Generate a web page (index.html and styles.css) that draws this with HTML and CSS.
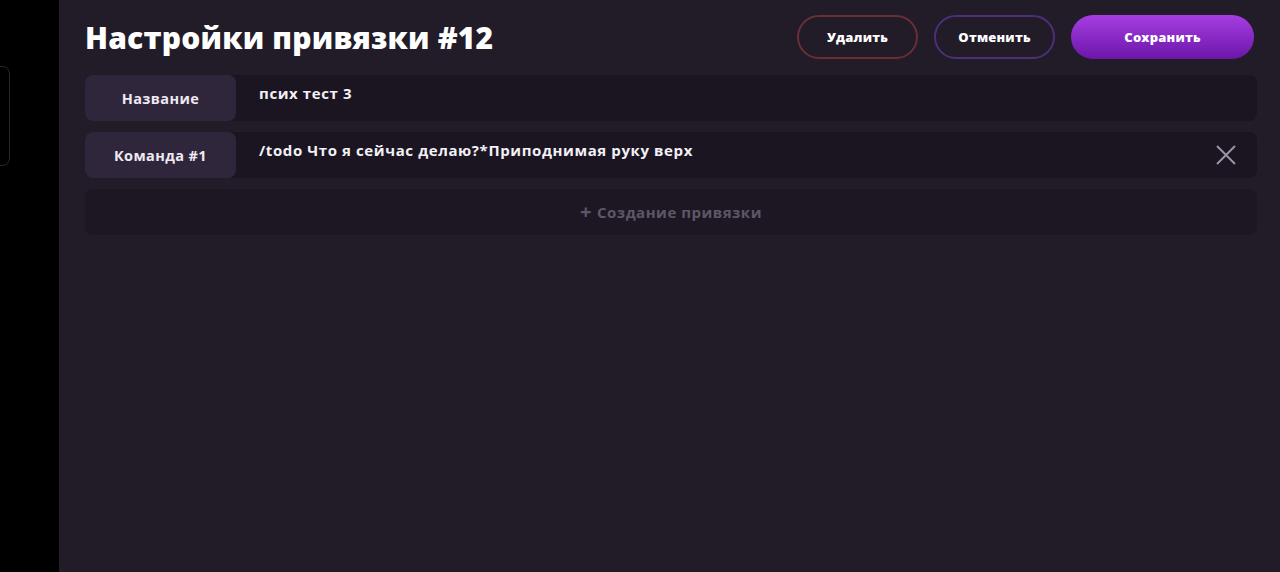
FILE: index.html
```html
<!DOCTYPE html>
<html lang="ru">
<head>
  <meta charset="UTF-8">
  <title>Настройки привязки #12</title>
  <link rel="stylesheet" href="styles.css">
</head>
<body>
  <aside class="side">
    <div class="side-tab"></div>
  </aside>

  <main class="panel">
    <div class="panel-head">
      <h1>Настройки привязки #12</h1>
      <div class="actions">
        <button class="btn btn-delete">Удалить</button>
        <button class="btn btn-cancel">Отменить</button>
        <button class="btn btn-save">Сохранить</button>
      </div>
    </div>

    <div class="row">
      <div class="row-label">Название</div>
      <div class="row-value">псих тест 3</div>
    </div>

    <div class="row">
      <div class="row-label">Команда #1</div>
      <div class="row-value">/todo Что я сейчас делаю?*Приподнимая руку верх</div>
      <span class="row-remove">
        <svg width="22" height="22" viewBox="0 0 22 22">
          <path d="M2 2 L20 20 M20 2 L2 20" stroke="#9a93a3" stroke-width="2" fill="none"/>
        </svg>
      </span>
    </div>

    <div class="add-row"><span class="plus">+</span> Создание привязки</div>
  </main>
</body>
</html>
```

FILE: styles.css
```css
/* Global */
body {
  margin: 0;
  height: 572px;
  display: flex;
  background: #000;
  font-family: 'Open Sans', sans-serif;
  color: #fff;
  overflow: hidden;
}

/* Left strip */
.side {
  width: 59px;
  flex-shrink: 0;
  padding-top: 66px;
}
.side-tab {
  width: 18px;
  height: 98px;
  margin-left: -10px;
  border: 1px solid #2a2630;
  border-radius: 8px;
}

/* Panel */
.panel {
  flex: 1;
  background: #221c29;
  padding: 15px 23px 0 26px;
}
.panel-head {
  display: flex;
  align-items: center;
  justify-content: space-between;
  height: 44px;
  margin-bottom: 16px;
}
.panel-head h1 {
  margin: 0;
  font-size: 30px;
  font-weight: 800;
  letter-spacing: 0.2px;
}

/* Buttons */
.actions {
  display: flex;
  gap: 16px;
  margin-right: 3px;
}
.btn {
  height: 44px;
  border-radius: 22px;
  background: transparent;
  color: #fff;
  font-family: 'Open Sans', sans-serif;
  font-size: 13px;
  font-weight: 800;
  letter-spacing: 0.2px;
  cursor: pointer;
}
.btn-delete {
  width: 121px;
  border: 2px solid #6a2e36;
}
.btn-cancel {
  width: 121px;
  border: 2px solid #4c2f78;
}
.btn-save {
  width: 183px;
  border: none;
  background: linear-gradient(180deg, #a73de2, #6b16a9);
}

/* Rows */
.row {
  position: relative;
  display: flex;
  height: 46px;
  margin-bottom: 11px;
  background: #1b1522;
  border-radius: 8px;
}
.row-label {
  width: 151px;
  display: flex;
  align-items: center;
  justify-content: center;
  background: #30263c;
  border-radius: 8px;
  font-size: 14.5px;
  font-weight: 700;
  letter-spacing: 0.4px;
  color: #eeeaf2;
}
.row-value {
  padding: 8px 0 0 23px;
  font-size: 15px;
  font-weight: 700;
  letter-spacing: 0.6px;
  color: #f3f0f6;
}
.row-remove {
  position: absolute;
  right: 20px;
  top: 12px;
}

/* Add */
.add-row {
  height: 46px;
  display: flex;
  align-items: center;
  justify-content: center;
  gap: 5px;
  background: #1d1724;
  border-radius: 8px;
  font-size: 15px;
  font-weight: 700;
  letter-spacing: 0.5px;
  color: #5e5667;
}
.plus {
  font-size: 20px;
  line-height: 1;
}
```
